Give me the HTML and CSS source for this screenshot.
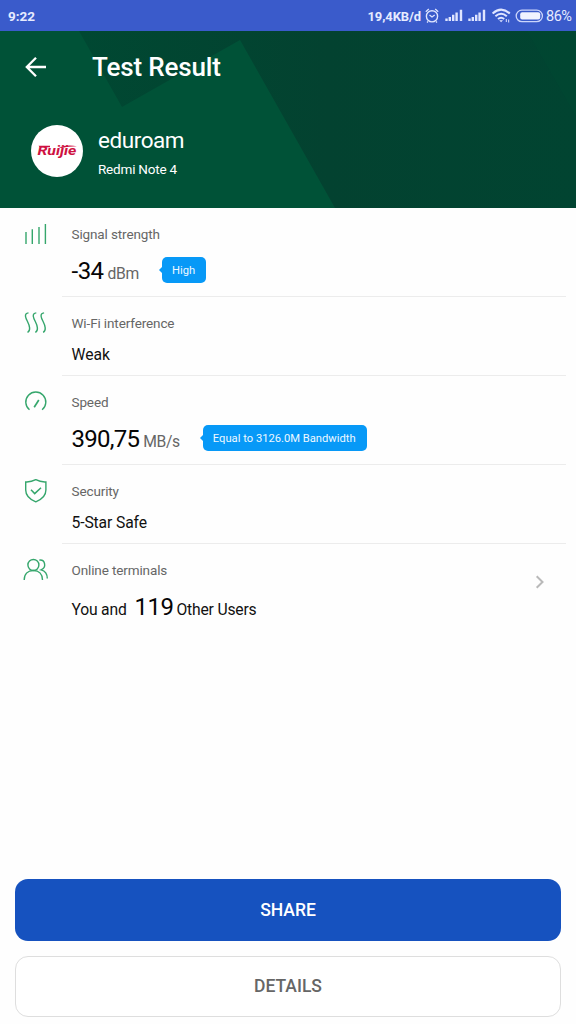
FILE: index.html
```html
<!DOCTYPE html>
<html lang="en">
<head>
<meta charset="utf-8">
<title>Test Result</title>
<link rel="stylesheet" href="styles.css">
</head>
<body>
<div class="screen">
  <div class="status">
    <span class="clock">9:22</span>
    <span class="rate">19,4KB/d</span>
    <svg class="status-icons" width="91" height="20" viewBox="424 6 91 20" fill="none" stroke="#dfe5ff">
      <circle cx="432" cy="16.3" r="5.6" stroke-width="1.4"/>
      <path d="M429.5 15l2.5 2 2.7-2M425.8 11.8l3-2.7M438.2 11.8l-3-2.7M428 21.5l-1 1M436 21.5l1 1" stroke-width="1.3"/>
      <path d="M446.5 18.5v2.500M449.8 17v4M453.2 14.800v6.200M456.6 12.500v8.500M461 9.700v11.300M469.5 18.500v2.500M472.8 17v4M476.2 14.800v6.200M479.6 12.500v8.500M484 9.700v11.300" stroke-width="2.400"/>
      <path d="M492.6 13.4q8.6-7.600 17.200 0M495.4 16.300q5.800-5 11.400 0M498 19q3.100-2.500 6.200 0" stroke-width="2"/>
      <path d="M499.2 20.2h3.800l-1.900 2z" fill="#dfe5ff" stroke="none"/>
      <path d="M506.3 19v3M508.7 19.5v3" stroke-width="1"/>
    </svg>
    <svg class="battery" width="30" height="14" viewBox="0 0 30 14">
      <rect x="1.2" y="1.2" width="26.2" height="11.4" rx="5.7" fill="none" stroke="#cbd5fb" stroke-width="1.3"/>
      <rect x="5.2" y="3.2" width="20" height="7.4" rx="2" fill="#f0f3ff"/>
    </svg>
    <span class="percent">86%</span>
  </div>

  <header class="hero">
    <svg class="hero-bg" width="576" height="177" viewBox="0 0 576 177" preserveAspectRatio="none">
      <defs>
        <linearGradient id="shade" x1="0" y1="0" x2="1" y2="0">
          <stop offset="0" stop-color="#004832"/><stop offset=".5" stop-color="#034230"/><stop offset="1" stop-color="#014431"/>
        </linearGradient>
      </defs>
      <rect width="576" height="177" fill="#005237"/>
      <path d="M79 0L122 76 240 9 335 177H576V0z" fill="url(#shade)"/>
      <path d="M527 0L576 85V0z" fill="#004a33" opacity=".35"/>
    </svg>
    <div class="bar">
      <svg class="back" width="24" height="24" viewBox="0 0 24 24" fill="none" stroke="#fff" stroke-width="2.3"><path d="M22 12H3.4M12 2.7L2.8 12l9.2 9.3"/></svg>
      <h1 class="title">Test Result</h1>
    </div>
    <div class="device">
      <div class="avatar">
        <span class="brand">Ruijie</span>
        <svg class="swoosh" width="42" height="8" viewBox="0 0 42 8"><path d="M2.500 1.700H14V3.200H4zM23 3.600Q30 .5 41 2.200 32 2.200 26 4z" fill="#ce1141"/></svg>
      </div>
      <div class="names">
        <div class="ssid">eduroam</div>
        <div class="model">Redmi Note 4</div>
      </div>
    </div>
  </header>

  <main class="rows">
    <section class="row tall">
      <svg class="icon" width="26" height="26" viewBox="0 0 26 26"><path d="M3 12v12M9.300 9.300v14.700M16 7v17M22.400 4v20" /></svg>
      <div class="content">
        <div class="label">Signal strength</div>
        <div class="value"><span class="big dbm-value">-34</span><span class="unit dbm">dBm</span><span class="tag high">High</span></div>
      </div>
    </section>
    <section class="row">
      <svg class="icon" width="26" height="26" viewBox="0 0 26 26"><path d="M5.500 3.900C0.500 4.500 2.800 9.500 4.500 12.500 6.600 16.500 8 22 4.500 23.300M13.300 3.900c-5 .6-2.700 5.600-1 8.600 2.100 4 3.500 9.500 0 10.800M21.100 3.900c-5 .6-2.700 5.600-1 8.600 2.100 4 3.500 9.500 0 10.800"/></svg>
      <div class="content">
        <div class="label">Wi-Fi interference</div>
        <div class="value plain">Weak</div>
      </div>
    </section>
    <section class="row tall">
      <svg class="icon" width="26" height="26" viewBox="0 0 26 26"><path d="M6.500 21.800A10 10 0 1 1 19.100 21.800"/><path d="M11.200 19.200L15.800 12" stroke-width="1.700"/></svg>
      <div class="content">
        <div class="label">Speed</div>
        <div class="value"><span class="big">390,75</span><span class="unit">MB/s</span><span class="tag equal">Equal to 3126.0M Bandwidth</span></div>
      </div>
    </section>
    <section class="row">
      <svg class="icon" width="26" height="26" viewBox="0 0 26 26"><path d="M12.800 2.700Q17.500 5.200 22.900 4.900V13c0 6.500-5 9.800-10.100 11.800C7.700 22.800 2.700 19.500 2.700 13V4.900Q8.100 5.200 12.800 2.700z"/><path d="M8 12.800l3.700 3.800L18 10.700" stroke-width="1.500"/></svg>
      <div class="content">
        <div class="label">Security</div>
        <div class="value plain safe">5-Star Safe</div>
      </div>
    </section>
    <section class="row last">
      <svg class="icon" width="26" height="26" viewBox="0 0 26 26"><circle cx="10.400" cy="9" r="5.500"/><path d="M1.200 24C1.200 18 5 14.500 10.400 14.500s9.100 3.500 9.100 9.500M16.300 4.100c6-.7 7.500 7.300 1.800 9.700 4 1.100 6.200 4.300 6.200 8.700"/></svg>
      <div class="content">
        <div class="label">Online terminals</div>
        <div class="value users"><span>You and</span><span class="big count">119</span><span>Other Users</span></div>
      </div>
      <svg class="chevron" width="10" height="14" viewBox="0 0 10 14"><path d="M1.700 1.300L7.500 7l-5.800 5.700" fill="none" stroke="#b9b9b9" stroke-width="2"/></svg>
    </section>
  </main>

  <footer class="actions">
    <button class="btn share">SHARE</button>
    <button class="btn details">DETAILS</button>
  </footer>
</div>
</body>
</html>
```
FILE: styles.css
```css
* { box-sizing: border-box; }
body { margin: 0; background: #fff; font-family: Roboto, sans-serif; }
.screen { width: 576px; height: 1024px; display: flex; flex-direction: column; overflow: hidden; background: #fefefe; }

.status { height: 31px; flex: none; background: #3a5bcb; color: #e6ebff; display: flex; align-items: center; padding: 1px 3px 0 8px; white-space: nowrap; }
.clock { font-size: 13.500px; font-weight: 700; }
.rate { margin-left: auto; font-size: 13px; font-weight: 700; letter-spacing: -.1px; }
.status-icons { flex: none; margin-left: 3px; }
.battery { flex: none; }
.percent { width: 27px; font-size: 14.500px; margin-left: 1px; letter-spacing: -.5px; }

.hero { position: relative; height: 176.500px; flex: none; color: #fff; overflow: hidden; background: #005237; }
.hero-bg { position: absolute; inset: 0; }
.bar { position: relative; height: 72px; display: flex; align-items: center; padding-left: 24px; }
.title { margin: 0 0 0 44px; font-size: 26px; font-weight: 500; line-height: 30px; letter-spacing: -.15px; }
.device { position: relative; display: flex; padding: 22px 0 0 31px; }
.avatar { position: relative; width: 52px; height: 52px; border-radius: 50%; background: #fff; display: flex; justify-content: center; align-items: center; }
.brand { font-size: 13px; font-weight: 700; font-style: italic; color: #ce1141; line-height: 14px; transform: scaleX(1.220); }
.swoosh { position: absolute; left: 5px; top: 19px; }
.names { margin-left: 15px; padding-top: 2px; }
.ssid { font-size: 22.500px; line-height: 26px; letter-spacing: -.45px; }
.model { margin-top: 7px; font-size: 13.500px; line-height: 18px; letter-spacing: -.2px; }

.rows { flex: 1; }
.row { display: flex; height: 79px; padding-left: 23px; }
.row.tall { height: 89px; }
.icon { flex: none; margin-top: 12px; fill: none; stroke: #35a66c; stroke-width: 1.400; }
.content { width: 504px; margin-left: 13px; padding: 17px 0 0 9.500px; border-bottom: 1.500px solid #ececec; }
.last { height: 90px; }
.last .content { border: 0; width: 473px; }
.label { font-size: 13.500px; line-height: 18px; color: #666; letter-spacing: -.12px; }
.value { display: flex; align-items: baseline; height: 36px; margin-top: 10px; line-height: 36px; white-space: nowrap; }
.plain { height: 24px; margin-top: 11px; line-height: 24px; font-size: 15.700px; color: #111; }
.safe { letter-spacing: -.12px; }
.big { font-size: 24px; color: #050505; letter-spacing: -.75px; }
.unit { margin-left: 4px; font-size: 15.700px; color: #666; letter-spacing: -.35px; }
.dbm-value { letter-spacing: -.5px; }
.tag { position: relative; align-self: flex-start; height: 26px; margin: 4px 0 0 23px; padding: 0 10px; border-radius: 5px; background: #0799f7; color: #eef8ff; font-size: 11.200px; line-height: 27px; }
.high { width: 44px; }
.equal { width: 164px; }
.tag::before { content: ""; position: absolute; left: -3px; top: 10px; border: solid transparent; border-width: 3px 3px 3px 0; border-right-color: #0799f7; }
.users { font-size: 15.700px; letter-spacing: -.2px; color: #111; }
.count { margin: 0 3px 0 8px; letter-spacing: -.5px; }
.chevron { margin: 31px 0 0; }

.actions { flex: none; display: flex; flex-direction: column; gap: 15px; padding: 0 15px 7px; }
.btn { height: 61.400px; width: 546px; border: 0; border-radius: 13px; font: 500 17.500px/24px Roboto, sans-serif; }
.share { background: #1652bf; color: #fff; }
.details { background: #fff; color: #666; border: 1.500px solid #dedede; }
```
